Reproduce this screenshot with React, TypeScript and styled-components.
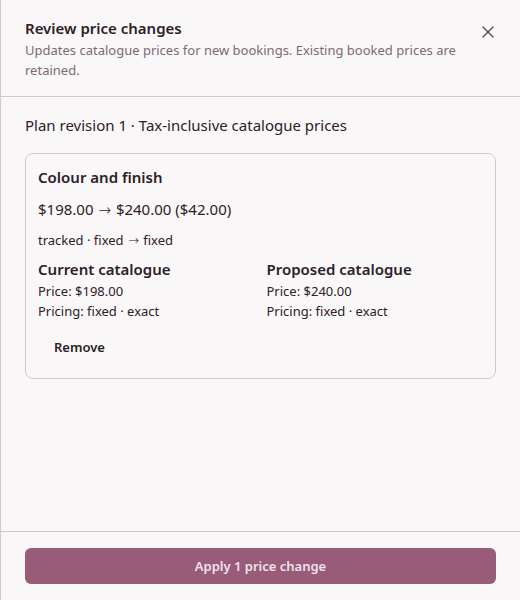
import styled, { createGlobalStyle } from 'styled-components';
import { X } from 'lucide-react';

const GlobalStyle = createGlobalStyle`
  html, body {
    margin: 0;
    padding: 0;
    background: #faf7f9;
  }
  body {
    font-family: "Noto Sans", "Open Sans", sans-serif;
    color: #2b2126;
  }
`;

const Panel = styled.div`
  display: flex;
  flex-direction: column;
  width: 520px;
  height: 600px;
  box-sizing: border-box;
  border-left: 1px solid #d8c6ce;
  background: #faf7f9;
`;

const Header = styled.div`
  display: flex;
  justify-content: space-between;
  align-items: flex-start;
  padding: 18px 22px 16px 24px;
  border-bottom: 1px solid #d8c6ce;
`;

const HeaderText = styled.div`
  display: flex;
  flex-direction: column;
  gap: 2px;
  max-width: 450px;
`;

const Title = styled.h2`
  margin: 0;
  font-size: 15px;
  font-weight: 600;
  line-height: 20px;
`;

const Subtitle = styled.p`
  margin: 0;
  font-size: 13px;
  line-height: 20px;
  color: #7c6a73;
`;

const CloseButton = styled.button`
  border: none;
  background: none;
  padding: 0;
  margin-top: 4px;
  color: #4a3d44;
  display: flex;
  cursor: pointer;
`;

const Body = styled.div`
  flex: 1;
  display: flex;
  flex-direction: column;
  gap: 18px;
  padding: 18px 24px;
`;

const Revision = styled.div`
  font-size: 15px;
  line-height: 20px;
`;

const Card = styled.div`
  border: 1px solid #d8c6ce;
  border-radius: 8px;
  padding: 12px 12px 16px 12px;
  display: flex;
  flex-direction: column;
`;

const CardTitle = styled.h3`
  margin: 0 0 10px;
  font-size: 15px;
  font-weight: 600;
  line-height: 22px;
`;

const Change = styled.div`
  font-size: 15px;
  line-height: 22px;
  margin-bottom: 10px;
`;

const Arrow = styled.span`
  font-family: "DejaVu Sans", sans-serif;
  font-weight: 200;
  line-height: 0;
  margin: 0 1px;
`;

const Meta = styled.div`
  font-size: 13px;
  line-height: 20px;
  margin-bottom: 7px;
`;

const Columns = styled.div`
  display: grid;
  grid-template-columns: 1fr 1fr;
  gap: 12px;
`;

const Column = styled.div`
  display: flex;
  flex-direction: column;
`;

const ColumnTitle = styled.h4`
  margin: 0;
  font-size: 15px;
  font-weight: 600;
  line-height: 24px;
`;

const Line = styled.div`
  font-size: 13px;
  line-height: 20px;
`;

const RemoveButton = styled.button`
  align-self: flex-start;
  margin-top: 11px;
  border: none;
  background: none;
  padding: 6px 16px;
  font-family: inherit;
  font-size: 13px;
  line-height: 18px;
  font-weight: 600;
  color: #2b2126;
  border-radius: 4px;
  cursor: pointer;
`;

const Footer = styled.div`
  border-top: 1px solid #d8c6ce;
  padding: 16px 24px;
`;

const ApplyButton = styled.button`
  width: 100%;
  height: 36px;
  border: none;
  border-radius: 6px;
  background: #985c78;
  color: #f1e2e9;
  font-family: inherit;
  font-size: 13px;
  font-weight: 600;
  cursor: pointer;
`;

export default function App() {
  return (
    <>
      <GlobalStyle />
      <Panel>
        <Header>
          <HeaderText>
            <Title>Review price changes</Title>
            <Subtitle>
              Updates catalogue prices for new bookings. Existing booked prices are retained.
            </Subtitle>
          </HeaderText>
          <CloseButton aria-label="Close">
            <X size={20} strokeWidth={1.4} />
          </CloseButton>
        </Header>
        <Body>
          <Revision>Plan revision 1 · Tax-inclusive catalogue prices</Revision>
          <Card>
            <CardTitle>Colour and finish</CardTitle>
            <Change>
              $198.00 <Arrow>→</Arrow> $240.00 ($42.00)
            </Change>
            <Meta>
              tracked · fixed <Arrow>→</Arrow> fixed
            </Meta>
            <Columns>
              <Column>
                <ColumnTitle>Current catalogue</ColumnTitle>
                <Line>Price: $198.00</Line>
                <Line>Pricing: fixed · exact</Line>
              </Column>
              <Column>
                <ColumnTitle>Proposed catalogue</ColumnTitle>
                <Line>Price: $240.00</Line>
                <Line>Pricing: fixed · exact</Line>
              </Column>
            </Columns>
            <RemoveButton>Remove</RemoveButton>
          </Card>
        </Body>
        <Footer>
          <ApplyButton>Apply 1 price change</ApplyButton>
        </Footer>
      </Panel>
    </>
  );
}
